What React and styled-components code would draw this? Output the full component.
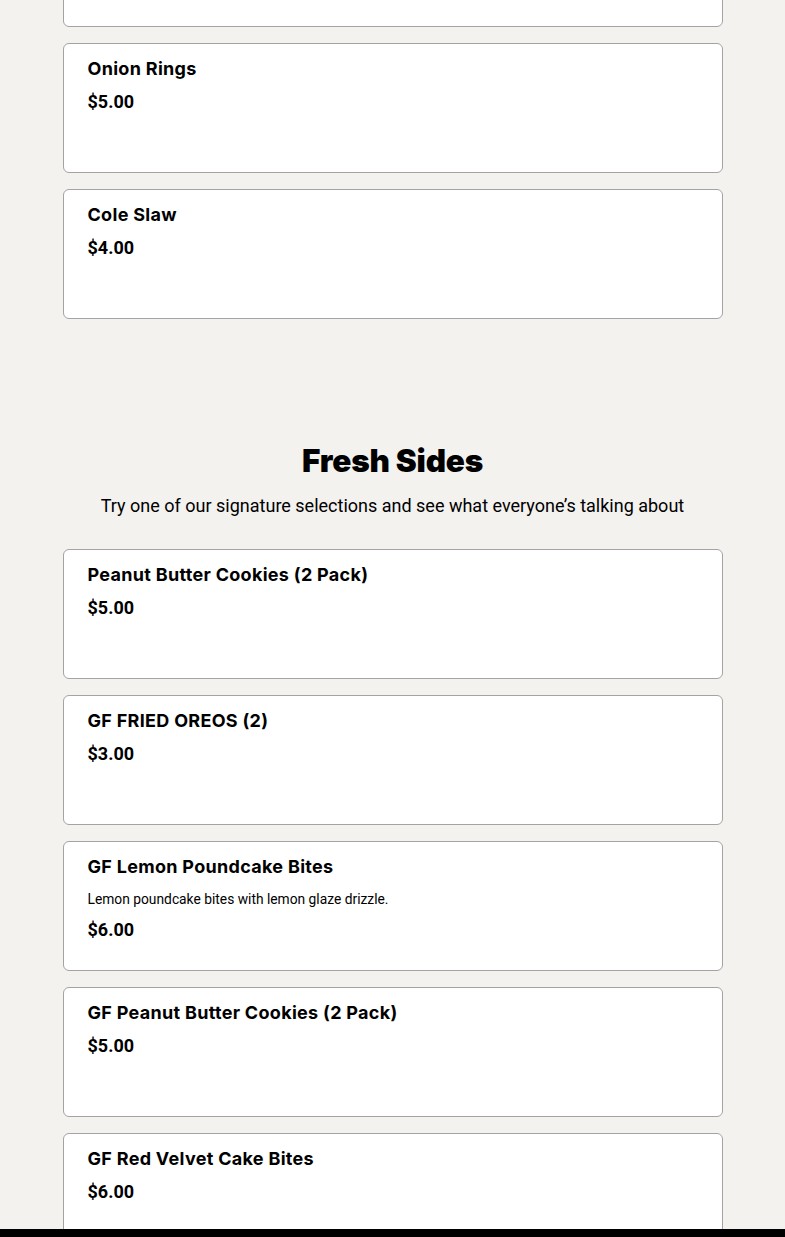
import React from 'react';
import styled, { createGlobalStyle } from 'styled-components';

const GlobalStyle = createGlobalStyle`
    html, body {
        margin: 0;
        padding: 0;
        background-color: #f3f2ef;
        color: #000;
        font-family: Roboto, 'Liberation Sans', sans-serif;
    }
`

const Page = styled.main`
    width: 660px;
    margin: -103px auto 0;
    padding-bottom: 40px;
`

const Section = styled.section`
    display: flex;
    flex-direction: column;
    align-items: center;
    & + & {
        margin-top: 120px;
    }
`

const Title = styled.h2`
    margin: 0;
    font-family: Inter, 'Liberation Sans', sans-serif;
    font-weight: 900;
    font-size: 31.5px;
    line-height: 44px;
    letter-spacing: -0.2px;
`

const Subtitle = styled.p`
    margin: 10px 0 30px;
    font-size: 18px;
    line-height: 26px;
`

const List = styled.div`
    width: 100%;
    display: flex;
    flex-direction: column;
    gap: 16px;
`

const Card = styled.div`
    box-sizing: border-box;
    height: 130px;
    padding: 14px 24px;
    background-color: #fff;
    border: 1px solid #a3a3a3;
    border-radius: 6px;
`

const Name = styled.h3`
    margin: 0 0 11px;
    font-family: Inter, 'Liberation Sans', sans-serif;
    font-weight: 700;
    font-size: 18px;
    line-height: 22px;
    letter-spacing: 0.3px;
`

const Desc = styled.p`
    margin: 0 0 10px;
    font-size: 13.8px;
    line-height: 20px;
`

const Price = styled.div`
    font-weight: 700;
    font-size: 18px;
    line-height: 22px;
`

const BottomBar = styled.div`
    position: fixed;
    left: 0;
    right: 0;
    bottom: 0;
    height: 8px;
    background-color: #000;
`

const previous = [
    { name: 'Fries', price: '$4.00' },
    { name: 'Onion Rings', price: '$5.00' },
    { name: 'Cole Slaw', price: '$4.00' },
]

const sides = [
    { name: 'Peanut Butter Cookies (2 Pack)', price: '$5.00' },
    { name: 'GF FRIED OREOS (2)', price: '$3.00' },
    { name: 'GF Lemon Poundcake Bites', desc: 'Lemon poundcake bites with lemon glaze drizzle.', price: '$6.00' },
    { name: 'GF Peanut Butter Cookies (2 Pack)', price: '$5.00' },
    { name: 'GF Red Velvet Cake Bites', price: '$6.00' },
]

const Item = ({ item }) => (
    <Card>
        <Name>{item.name}</Name>
        {item.desc && <Desc>{item.desc}</Desc>}
        <Price>{item.price}</Price>
    </Card>
)

const App = () => {
    return (
        <>
            <GlobalStyle />
            <Page>
                <Section>
                    <List>
                        {previous.map((item) => <Item key={item.name} item={item} />)}
                    </List>
                </Section>
                <Section>
                    <Title>Fresh Sides</Title>
                    <Subtitle>Try one of our signature selections and see what everyone’s talking about</Subtitle>
                    <List>
                        {sides.map((item) => <Item key={item.name} item={item} />)}
                    </List>
                </Section>
            </Page>
            <BottomBar />
        </>
    );
};

export default App;
